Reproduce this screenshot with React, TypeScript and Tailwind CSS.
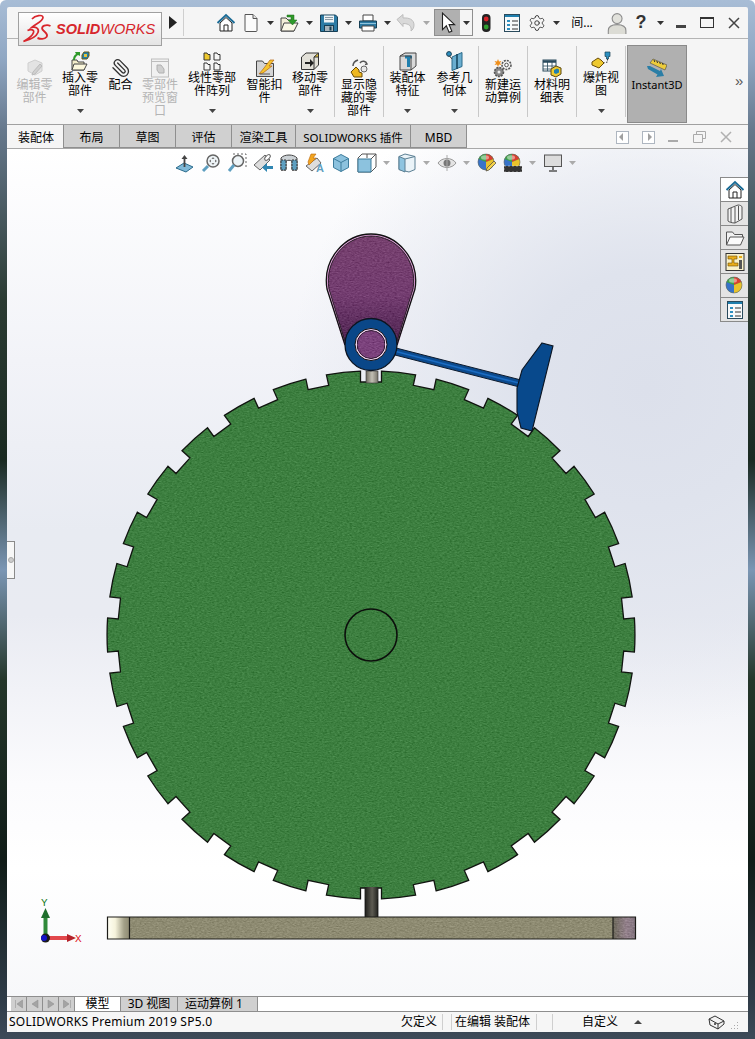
import type { ReactNode } from "react";
import { Paperclip, Settings } from "lucide-react";

// gear outline: 30 square notches cut from a 264 radius disc
function gearPath() {
  const cx = 371, cy = 635, R = 264, r = 253, w = 10.5;
  const h = Math.sqrt(R * R - w * w);
  let d = "";
  for (let k = 0; k < 30; k++) {
    const a = (k * 12 * Math.PI) / 180;
    const ux = Math.sin(a), uy = -Math.cos(a), tx = Math.cos(a), ty = Math.sin(a);
    const p = (rad: number, off: number) =>
      `${(cx + ux * rad + tx * off).toFixed(1)} ${(cy + uy * rad + ty * off).toFixed(1)}`;
    d += k === 0 ? `M${p(h, -w)}` : `A${R} ${R} 0 0 1 ${p(h, -w)}`;
    d += `L${p(r, -w)}L${p(r, w)}L${p(h, w)}`;
  }
  const b = (12 * 30 * Math.PI) / 180;
  d += `A${R} ${R} 0 0 1 ${(cx + Math.sin(b) * h - Math.cos(b) * w).toFixed(1)} ${(cy - Math.cos(b) * h - Math.sin(b) * w).toFixed(1)}Z`;
  return d;
}

function Ico({ children, s = 20 }: { children: ReactNode; s?: number }) {
  return (
    <svg width={s} height={s} viewBox="0 0 20 20" className="block shrink-0">
      {children}
    </svg>
  );
}

const HomeIcon = () => (
  <Ico>
    <path d="M1.5 10 10 2l8.500 8" fill="none" stroke="#1c6c96" strokeWidth="2" />
    <path d="M4 10v8h12v-8L10 4.500Z" fill="#fff" stroke="#222" />
    <path d="M8 18v-6h4v6" fill="none" stroke="#222" />
  </Ico>
);
const NewDoc = () => (
  <Ico>
    <path d="M4 1.500h8l4 4v12a1 1 0 0 1-1 1H5a1 1 0 0 1-1-1Z" fill="#fbfbfb" stroke="#555" />
    <path d="M12 1.500v4h4" fill="#e4e4e4" stroke="#555" />
  </Ico>
);
const OpenDoc = () => (
  <Ico>
    <path d="M2 18V5h5l2 2h6v11Z" fill="#f4efd8" stroke="#444" />
    <path d="M2 18 5 10h14l-4 8Z" fill="#fbf8e6" stroke="#444" />
    <path d="M8 2h7v5h3l-4.500 5L9 7h3V4H8Z" fill="#2f9a2a" stroke="#1c6a1a" strokeWidth=".5" />
  </Ico>
);
const SaveIcon = () => (
  <Ico>
    <path d="M1.500 2h15l2 2v14.500h-17Z" fill="#2c7ba5" stroke="#173f55" />
    <rect x="5" y="2.500" width="10" height="7" fill="#eef3f5" />
    <path d="M6 4.500h8M6 6.500h8" stroke="#8a9aa5" />
    <rect x="5.500" y="12.500" width="9" height="6" fill="#a7b4bb" stroke="#173f55" />
    <rect x="10.500" y="13.500" width="2" height="4" fill="#173f55" />
  </Ico>
);
const PrintIcon = () => (
  <Ico>
    <path d="M5 2h10v6H5Z" fill="#fff" stroke="#444" />
    <path d="M1.500 8h17v7h-17Z" fill="#2c7ba5" stroke="#173f55" />
    <path d="M4 13h12v5H4Z" fill="#fff" stroke="#444" />
    <path d="M2 10.500h16" stroke="#8ec3dc" />
  </Ico>
);
const UndoIcon = () => (
  <Ico>
    <path d="M1 6.500 7 1.500v3.500c6-.5 11 1.500 11 7 0 3-1.500 5-3 6 .8-4.500-1.500-7.500-8-7.500v3Z" fill="#d9d9d9" stroke="#bdbdbd" />
  </Ico>
);
const Cursor = () => (
  <Ico s={22}>
    <path d="M5 1v15l3.500-3.500 2.500 6 2.500-1-2.500-6h5Z" fill="#fff" stroke="#222" />
  </Ico>
);
const Traffic = () => (
  <Ico>
    <rect x="6" y="1" width="8.500" height="18" rx="4" fill="#222" />
    <circle cx="10.200" cy="6" r="2.400" fill="#d8232a" />
    <circle cx="10.200" cy="14" r="2.400" fill="#2f9d2f" />
  </Ico>
);
const ListPanel = () => (
  <Ico>
    <rect x="2.500" y="1.500" width="15" height="17" fill="#f7f9fa" stroke="#2a4a5c" />
    <path d="M3 3h14" stroke="#1f7fae" strokeWidth="2" />
    <path d="M5 7h3v2H5Zm0 4h3v2H5Zm0 4h3v2H5Z" fill="#2c8fc0" />
    <path d="M10 8h6M10 12h6M10 16h6" stroke="#333" />
  </Ico>
);
const UserIcon = () => (
  <Ico s={22}>
    <circle cx="11" cy="6" r="4.500" fill="#e2e2dc" stroke="#8d8d8d" />
    <path d="M3 21v-4c0-4 3-5.500 8-5.500s8 1.500 8 5.500v4Z" fill="#dcdcd5" stroke="#8d8d8d" />
  </Ico>
);
const Arrow = ({ color = "#333" }: { color?: string }) => (
  <svg width="7" height="4" viewBox="0 0 7 4" className="block">
    <path d="M0 0h7L3.500 4Z" fill={color} />
  </svg>
);

// ribbon pictures
const EditPart = () => (
  <Ico>
    <path d="M10 2 17 5v8l-7 4-7-4V5Z" fill="#e3e3e3" stroke="#cfcfcf" />
    <path d="m8 14 7-8 2 2-7 8-3 1Z" fill="#d0d0d0" stroke="#bcbcbc" />
  </Ico>
);
const InsertPart = () => (
  <Ico>
    <path d="M2 19V9h5l1 2h6v8Z" fill="#f2ecc9" stroke="#444" />
    <path d="M2 19 4 13h13l-3 6Z" fill="#fbf7dc" stroke="#444" />
    <path d="M3 9c0-3 1-5 3-6l-1-2h5v4L8 4C6 5 5 7 5 9Z" fill="#2f9a2a" />
    <path d="M14 1h5v4l-2 3h-5V4Z" fill="#1f7fae" stroke="#6b5a14" />
    <path d="M14 3h3v3h-3Z" fill="#e7c53b" />
  </Ico>
);
const Preview = () => (
  <Ico>
    <rect x="1.500" y="1" width="17" height="18" fill="#f1f1f1" stroke="#bdbdbd" />
    <path d="M1.500 3.500h17" stroke="#bdbdbd" />
    <path d="M7 7h4l3 4v4H9l-2-3Z" fill="#cfcfcf" stroke="#b0b0b0" />
  </Ico>
);
const Pattern = () => (
  <Ico>
    <path d="M2 2h3l1 1.500h2V9H2Z" fill="#eec92f" stroke="#333" />
    <path d="M12 2h3l1 1.500h2V9h-6ZM2 12h3l1 1.500h2V19H2ZM12 12h3l1 1.500h2V19h-6Z" fill="#f6f6f6" stroke="#333" />
  </Ico>
);
const Fastener = () => (
  <Ico>
    <path d="M1.500 18.500V3h6l2 2.500h9v13Z" fill="#d4d4d4" stroke="#444" />
    <path d="M4 16 9 10l6-8h4l-5 6h3l-9 7Z" fill="#f4c430" stroke="#b8650f" strokeWidth=".7" />
    <path d="M5 16h10" stroke="#555" />
  </Ico>
);
const MovePart = () => (
  <Ico>
    <path d="M1.500 6 6 2h12.500v12L14 18.500H1.500Z" fill="#e2e0d8" stroke="#333" />
    <path d="M14 6h4.500V2L14 6v12.500" fill="#e7c53b" stroke="#333" />
    <path d="M5 11h5V8l4 4-4 4v-3H5Z" fill="#222" />
  </Ico>
);
const ShowHidden = () => (
  <Ico>
    <path d="M2 14 7 9l3 3v2l3 1v4H5Z" fill="#eeb71f" stroke="#6a4c08" />
    <path d="M11 5c2-3 6-2 7 1l-2 .5M4 8c0-3 2-5 5-6" fill="none" stroke="#555" strokeWidth="1.500" />
    <circle cx="15" cy="11" r="3" fill="#e8e8e8" stroke="#666" />
  </Ico>
);
const Stack = () => (
  <Ico>
    <path d="M2 5 7 2h11v13l-5 4H2Z" fill="#d9d9d9" stroke="#444" />
    <path d="M7 6h7" stroke="#1f7fae" strokeWidth="3" />
    <path d="M10.500 6v10" stroke="#1f7fae" strokeWidth="3" />
    <path d="M2 5h11v14" fill="none" stroke="#444" />
  </Ico>
);
const RefGeom = () => (
  <Ico>
    <circle cx="4" cy="3" r="2.400" fill="#2c8fc0" stroke="#173f55" />
    <path d="M7 6 17 1.500v14L7 19.500Z" fill="#6aaed0" stroke="#2a6a8a" />
    <path d="M12 3v15" stroke="#12405a" strokeWidth="1.500" />
    <path d="M4 4.500 7 8" stroke="#444" />
  </Ico>
);
const Motion = () => (
  <Ico>
    <circle cx="13.500" cy="7" r="4.500" fill="#f2f2f2" stroke="#555" strokeWidth="1.600" strokeDasharray="2 1" />
    <circle cx="13.500" cy="7" r="1.800" fill="#fff" stroke="#555" />
    <circle cx="6" cy="14" r="4.500" fill="#888" stroke="#555" strokeWidth="1.600" strokeDasharray="2 1" />
    <circle cx="6" cy="14" r="1.500" fill="#eee" />
    <path d="m5 1 1 2.500L8.500 3 7 5l1.500 2L6 6.500 5 9 4 6.500 1.500 7 3 5 1.500 3 4 3.500Z" fill="#ef8f1c" />
  </Ico>
);
const Bom = () => (
  <Ico>
    <rect x="1" y="2" width="13" height="11" fill="#fff" stroke="#2a4a5c" />
    <path d="M1 3.500h13" stroke="#2a4a5c" strokeWidth="2.500" />
    <path d="M1 8h13M1 11h8M5.500 3v10M10 3v10" stroke="#2a4a5c" strokeWidth=".8" />
    <path d="m9 11 5-3 5 2v6l-5 3-5-2Z" fill="#eec92f" stroke="#5a4810" />
    <path d="m12 12 3-1.500 2 1v3l-3 1.500-2-1Z" fill="#1f7fae" />
  </Ico>
);
const Explode = () => (
  <Ico>
    <path d="m1 11 6-4 3 2 3 3-5 5-7-3Z" fill="#eec92f" stroke="#6a4c08" />
    <path d="M14 1h5v4.500h-1.500V8h-2V5.500H14Z" fill="#2c8fc0" stroke="#173f55" strokeWidth=".7" />
    <path d="M16.500 8v3l-4 1" fill="none" stroke="#333" strokeDasharray="1.500 1.500" />
  </Ico>
);
const Instant3D = () => (
  <Ico>
    <path d="M3 5 6 1l14 6-2 5Z" fill="#eccb3c" stroke="#444" strokeWidth=".6" />
    <path d="m7 2 .8 2m2-1 .8 2m2-1 .8 2m2-1 .8 2" stroke="#333" />
    <path d="M0 8h3l10 5 1-2 3 7-8 1 1.500-2.500L1 11Z" fill="#2b7ea6" />
  </Ico>
);

// heads-up bar pictures
const NormalTo = () => (
  <Ico>
    <path d="m1 15 8-5 9 4-7 5Z" fill="#7fb9d8" stroke="#2a6a8a" />
    <path d="M9.500 14V4" stroke="#444" strokeWidth="1.800" />
    <path d="m6.500 6 3-4 3 4Z" fill="#444" />
  </Ico>
);
const ZoomFit = () => (
  <Ico>
    <circle cx="12" cy="8" r="6" fill="#eef4f7" stroke="#666" strokeWidth="1.500" />
    <path d="m12 4 1.500 2h-3Zm0 8-1.500-2h3ZM8 8l2-1.500v3Zm8 0-2 1.500v-3Z" fill="#777" />
    <path d="m7 13-5 5" stroke="#5e9fc0" strokeWidth="3" />
  </Ico>
);
const ZoomArea = () => (
  <Ico>
    <path d="M6 1h13v13" fill="none" stroke="#666" strokeDasharray="2 2" />
    <circle cx="11" cy="8" r="5.500" fill="#eef4f7" stroke="#666" strokeWidth="1.500" />
    <path d="m7 12-5 6" stroke="#5e9fc0" strokeWidth="3" />
  </Ico>
);
const PrevView = () => (
  <Ico>
    <path d="m1 12 11-10 5 5L7 17Z" fill="#ddd" stroke="#666" />
    <ellipse cx="14.500" cy="4.500" rx="1.800" ry="3.500" transform="rotate(45 14.500 4.500)" fill="#fff" stroke="#666" />
    <path d="M20 13h-6v-3l-5 4.500 5 4.500v-3h6Z" fill="#2f86b2" />
  </Ico>
);
const Section = () => (
  <Ico>
    <path d="M2 5c3-4 13-4 16 0v12h-5V8c-2-1-4-1-6 0v9H2Z" fill="#ccd2d6" stroke="#444" />
    <path d="M2 7h5v10H2ZM13 7h5v10h-5Z" fill="#5e9fc0" stroke="#333" strokeDasharray="2 1" />
  </Ico>
);
const Dynamic = () => (
  <Ico>
    <path d="m1 13 11-8 4 5-9 8Z" fill="#ddd" stroke="#666" />
    <path d="m3 9 3-8h5L8 5h3l-7 7Z" fill="#f2a51f" stroke="#b8650f" strokeWidth=".6" />
    <text x="11" y="19" fontSize="11" fontWeight="700" fill="#5e9fc0" fontFamily="Liberation Sans">A</text>
  </Ico>
);
const Cube = () => (
  <Ico>
    <path d="m10 1.500 7.500 4v9l-7.500 4-7.500-4v-9Z" fill="#8cc2de" stroke="#3d7c9c" />
    <path d="m2.500 5.500 7.500 4 7.500-4M10 9.500v9" fill="none" stroke="#3d7c9c" />
  </Ico>
);
const Orient = () => (
  <Ico>
    <path d="M5 1h14v13l-5 5H1V5Z" fill="#fff" stroke="#555" />
    <path d="M1 6h13v13H1Z" fill="#8cc2de" stroke="#3d7c9c" />
    <path d="M10 1v4M14 6l5-5" stroke="#555" />
  </Ico>
);
const DisplayStyle = () => (
  <Ico>
    <path d="M2 3.500 8 1l10 2.500v13L12 19 2 16.500Z" fill="#eaf3f8" stroke="#5b7f93" />
    <path d="M2 3.500 8 6v13l-6-2.500Z" fill="#8ec4e0" stroke="#5b7f93" />
    <path d="M8 6l10-2.500" stroke="#5b7f93" />
  </Ico>
);
const Eye = () => (
  <Ico>
    <path d="M1 10c4-6 14-6 18 0-4 6-14 6-18 0Z" fill="#e4e4e4" stroke="#999" />
    <circle cx="10" cy="10" r="3.500" fill="#777" />
    <path d="M10 2v16" stroke="#aaa" />
  </Ico>
);
const Sphere = ({ extra }: { extra?: ReactNode }) => (
  <Ico>
    <circle cx="9" cy="9" r="8" fill="#2e9b3d" />
    <path d="M9 1a8 8 0 0 1 7.500 5L9 9Z" fill="#d8402f" />
    <path d="M9 1a8 8 0 0 0-7.500 5L9 9Z" fill="#3fa34a" />
    <path d="M1.500 6A8 8 0 0 0 9 17V9Z" fill="#3773c8" />
    <path d="M9 9v8a8 8 0 0 0 7.500-11Z" fill="#e9c22b" />
    <ellipse cx="8" cy="4.500" rx="4" ry="2.200" fill="#fff" opacity=".45" />
    <circle cx="9" cy="9" r="8" fill="none" stroke="#6d6d6d" strokeWidth=".6" />
    {extra}
  </Ico>
);
const Monitor = () => (
  <Ico>
    <rect x="1.500" y="2" width="17" height="11.500" fill="#dcdcdc" stroke="#555" />
    <path d="M10 14v3M6 18h8" stroke="#555" strokeWidth="1.600" />
  </Ico>
);
const FolderOpen = () => (
  <Ico>
    <path d="M1.500 17V4h6l2 2.500h8V9" fill="#f1f1f1" stroke="#555" />
    <path d="M1.500 17 5 9h14l-3.500 8Z" fill="#fafafa" stroke="#555" />
  </Ico>
);
const Layout = () => (
  <Ico>
    <rect x="1" y="1.500" width="18" height="17" fill="#f9f1c8" stroke="#333" />
    <path d="M3 4h9v3H9v4h4v3H3v-3h4V7H3Z" fill="#e9ad1a" stroke="#6a4c08" strokeWidth=".6" />
    <path d="M14 4h3v2h-3Z" fill="#e9ad1a" />
    <path d="M14 8h3v9h-3Z" fill="#555" />
  </Ico>
);
const Cylinders = () => (
  <Ico>
    <path d="M3 5 13 1c2 0 4 1 4 2v12l-7 4c-3 0-6-1-7-2Z" fill="#f2f2f2" stroke="#555" />
    <path d="M6 4v14M10 3v16M13.500 2v14" stroke="#555" />
  </Ico>
);

function RibbonCol({
  label, icon, low = false, off = false, drop = false, className,
}: {
  label: string[]; icon: ReactNode; low?: boolean; off?: boolean; drop?: boolean; className: string;
}) {
  return (
    <div className={`flex h-full flex-col items-center ${low ? "pt-[19px]" : "pt-[12px]"} ${className}`}>
      <div className="flex h-[20px] items-center justify-center">{icon}</div>
      <div className={`text-center text-[12px] leading-[13px] whitespace-nowrap ${off ? "text-[#b4b4b4]" : "text-black"}`}>
        {label.map((l) => (
          <div key={l}>{l}</div>
        ))}
      </div>
      {drop && (
        <div className="mt-auto mb-[11px]">
          <Arrow color="#444" />
        </div>
      )}
    </div>
  );
}

const Sep = () => <div className="my-[7px] w-px shrink-0 bg-[#c8c8c8]" />;

function Slot({ className, children }: { className: string; children: ReactNode }) {
  return <div className={`flex shrink-0 items-center justify-center ${className}`}>{children}</div>;
}

function PaneBtn({ children, active = false }: { children: ReactNode; active?: boolean }) {
  return (
    <div className={`flex h-[25px] w-[28px] items-center justify-center border border-r-0 border-[#8a8a8a] -mt-px ${active ? "bg-white" : "bg-[#e4e4e4]"}`}>
      {children}
    </div>
  );
}

function NavBtn({ d }: { d: string }) {
  return (
    <div className="flex h-full w-[16px] items-center justify-center border-r border-[#8e8e8e] bg-[#cfcfcf]">
      <svg width="10" height="10" viewBox="0 0 10 10">
        <path d={d} fill="#a4a4a4" stroke="#8c8c8c" strokeWidth=".5" />
      </svg>
    </div>
  );
}

const mainTabs = ["布局", "草图", "评估"];

export default function App() {
  return (
    <div className="flex h-[1039px] w-[755px] flex-col overflow-hidden rounded-t-[6px] bg-[linear-gradient(180deg,#a8bdd6_0,#8fa6c2_60px,#66788c_130px,#2b3b33_300px,#1a2a22_460px,#7b96b4_570px,#24362a_680px,#101c18_860px,#2f3c48_1000px,#3d4a58_1039px)] px-[7px] pt-[7px] pb-[7px] font-['Noto_Sans','Noto_Sans_CJK_SC',sans-serif] text-black">
      <div className="flex min-h-0 flex-1 flex-col rounded-t-[2px] bg-[#f5f5f5]">
        {/* title row */}
        <div className="relative z-10 flex h-[31px] shrink-0 items-center">
          <div className="mt-[5px] ml-[11px] flex h-[34px] w-[144px] shrink-0 items-center gap-[2px] self-start border border-[#a0a0a0] bg-[linear-gradient(180deg,#fff,#e4e4e4)] pl-[4px]">
            <svg width="31" height="30" viewBox="0 0 31 30" className="shrink-0">
              <path d="M9 5C12 1.500 20 0 20 3.500 20 7.500 12 10 8.500 13.500 13 12.500 16.500 14.500 15 18.500 13 23.500 6 26 .5 27.500 5 25 9.500 22 10.500 18.500 11.500 15.500 8 15 4.500 16.500" fill="none" stroke="#d9262c" strokeWidth="1.700" />
              <path d="M27.500 12C23.500 10 17.500 12 19.500 15.500 21 18 26 19.500 23.500 23 21.500 25.500 17 25 14.500 24" fill="none" stroke="#d9262c" strokeWidth="1.900" />
            </svg>
            <span className="font-['Liberation_Sans',sans-serif] text-[14.500px] leading-none text-[#d7262c] italic">
              <span className="font-bold">SOLID</span>WORKS
            </span>
          </div>
          <Slot className="w-[21px]">
            <svg width="8" height="13" viewBox="0 0 8 13">
              <path d="M0 0 8 6.500 0 13Z" fill="#222" />
            </svg>
          </Slot>
          <div className="h-[27px] w-px shrink-0 bg-[#cfcfcf]" />
          <div className="w-[30px] shrink-0" />
          <Slot className="w-[24px]"><HomeIcon /></Slot>
          <Slot className="w-[26px]"><NewDoc /></Slot>
          <Slot className="w-[12px]"><Arrow /></Slot>
          <Slot className="w-[26px]"><OpenDoc /></Slot>
          <Slot className="w-[14px]"><Arrow /></Slot>
          <Slot className="w-[26px]"><SaveIcon /></Slot>
          <Slot className="w-[12px]"><Arrow /></Slot>
          <Slot className="w-[28px]"><PrintIcon /></Slot>
          <Slot className="w-[10px]"><Arrow /></Slot>
          <Slot className="w-[28px]"><UndoIcon /></Slot>
          <Slot className="w-[12px]"><Arrow color="#a8a8a8" /></Slot>
          <div className="ml-[2px] flex h-[27px] w-[39px] shrink-0 border border-[#8e8e8e]">
            <div className="flex w-[25px] items-center justify-center bg-[#b0b0b0]"><Cursor /></div>
            <div className="flex flex-1 items-center justify-center bg-[#f4f4f4]"><Arrow /></div>
          </div>
          <Slot className="w-[26px]"><Traffic /></Slot>
          <Slot className="w-[26px]"><ListPanel /></Slot>
          <Slot className="w-[24px]"><Settings size={18} strokeWidth={1.2} color="#333" /></Slot>
          <Slot className="w-[14px]"><Arrow /></Slot>
          <Slot className="w-[38px] text-[12px]">间...</Slot>
          <Slot className="w-[30px]"><UserIcon /></Slot>
          <Slot className="w-[20px] font-['Liberation_Sans',sans-serif] text-[18px] font-bold text-[#333]">?</Slot>
          <Slot className="w-[18px]"><Arrow /></Slot>
          <Slot className="w-[24px]"><div className="mt-[7px] h-[3px] w-[10px] bg-[#444]" /></Slot>
          <Slot className="w-[27px]"><div className="h-[11px] w-[14px] border border-t-[2px] border-[#333]" /></Slot>
          <Slot className="w-[27px]">
            <svg width="12" height="12" viewBox="0 0 12 12">
              <path d="m1 1 10 10M11 1 1 11" stroke="#444" strokeWidth="1.500" />
            </svg>
          </Slot>
        </div>

        {/* ribbon */}
        <div className="flex h-[87px] shrink-0 border-t border-b border-[#a0a0a0] border-t-[#b4b4b4] pl-[4px]">
          <RibbonCol className="w-[47px]" low off label={["编辑零", "部件"]} icon={<EditPart />} />
          <RibbonCol className="w-[44px]" drop label={["插入零", "部件"]} icon={<InsertPart />} />
          <RibbonCol className="w-[37px]" low label={["配合"]} icon={<Paperclip size={20} strokeWidth={1.6} color="#333" className="-scale-x-100" />} />
          <RibbonCol className="w-[42px]" low off label={["零部件", "预览窗", "口"]} icon={<Preview />} />
          <RibbonCol className="w-[62px]" drop label={["线性零部", "件阵列"]} icon={<Pattern />} />
          <RibbonCol className="w-[43px]" low label={["智能扣", "件"]} icon={<Fastener />} />
          <RibbonCol className="w-[48px]" drop label={["移动零", "部件"]} icon={<MovePart />} />
          <Sep />
          <RibbonCol className="w-[48px]" low label={["显示隐", "藏的零", "部件"]} icon={<ShowHidden />} />
          <Sep />
          <RibbonCol className="w-[47px]" drop label={["装配体", "特征"]} icon={<Stack />} />
          <RibbonCol className="w-[47px]" drop label={["参考几", "何体"]} icon={<RefGeom />} />
          <Sep />
          <RibbonCol className="w-[48px]" low label={["新建运", "动算例"]} icon={<Motion />} />
          <Sep />
          <RibbonCol className="w-[48px]" low label={["材料明", "细表"]} icon={<Bom />} />
          <Sep />
          <RibbonCol className="w-[48px]" drop label={["爆炸视", "图"]} icon={<Explode />} />
          <Sep />
          <div className="mt-[6px] mb-[1px] ml-[1px] flex w-[60px] shrink-0 flex-col items-center border border-[#8a8a8a] bg-[#b0b0b0] pt-[12px]">
            <Instant3D />
            <div className="text-[11px] leading-[13px]">Instant3D</div>
          </div>
          <div className="ml-[48px] self-center font-['Liberation_Sans',sans-serif] text-[15px] text-[#555]">»</div>
        </div>

        {/* tab strip */}
        <div className="flex h-[23px] shrink-0 items-stretch pl-[2px]">
          <div className="flex w-[55px] items-center justify-center border-r border-[#8f8f8f] pt-[3px] text-[12px]">装配体</div>
          {mainTabs.map((t) => (
            <div key={t} className="flex w-[56px] items-center justify-center border-r border-b border-[#8f8f8f] bg-[#d0d0d0] pt-[3px] text-[12px]">{t}</div>
          ))}
          <div className="flex w-[64px] items-center justify-center border-r border-b border-[#8f8f8f] bg-[#d0d0d0] pt-[3px] text-[12px]">渲染工具</div>
          <div className="flex w-[115px] items-center justify-center border-r border-b border-[#8f8f8f] bg-[#d0d0d0] pt-[3px] text-[11.5px]">SOLIDWORKS 插件</div>
          <div className="flex w-[56px] items-center justify-center border-r border-b border-[#8f8f8f] bg-[#d0d0d0] pt-[3px] text-[12px]">MBD</div>
          <div className="ml-[149px] flex items-center gap-[13px] pt-[1px]">
            <div className="flex h-[13px] w-[13px] items-center border border-[#aeb6c0] bg-white"><div className="ml-[2px] h-0 w-0 border-y-[4px] border-r-[4px] border-y-transparent border-r-[#a0a0a0]" /></div>
            <div className="flex h-[13px] w-[13px] items-center justify-end border border-[#aeb6c0] bg-white"><div className="mr-[2px] h-0 w-0 border-y-[4px] border-l-[4px] border-y-transparent border-l-[#a0a0a0]" /></div>
            <div className="mt-[8px] h-[2px] w-[10px] bg-[#aaa]" />
            <svg width="13" height="12" viewBox="0 0 13 12" className="ml-[2px]">
              <path d="M3.500 3V.5h9v7H9M.5 3.500h9v8h-9Z" fill="none" stroke="#aaa" />
            </svg>
            <svg width="12" height="12" viewBox="0 0 12 12" className="ml-px">
              <path d="m1 1 10 10M11 1 1 11" stroke="#b0b0b0" strokeWidth="1.500" />
            </svg>
          </div>
        </div>

        {/* graphics area */}
        <div className="relative min-h-0 flex-1 overflow-hidden border-t border-[#a8a8a8] bg-[radial-gradient(ellipse_360px_340px_at_640px_240px,#dce0eb_0%,#dfe3ed_35%,rgba(223,227,237,0)_100%),linear-gradient(180deg,#ffffff_0%,#f2f3f8_25%,#e8ebf2_45%,#e9ebf2_55%,#fbfbfd_75%,#ffffff_85%,#f7f8fa_100%)]">
          <svg viewBox="7 149 741 847" className="absolute inset-0 h-full w-full">
            <defs>
              <filter id="grain" x="0" y="0" width="100%" height="100%" colorInterpolationFilters="sRGB">
                <feTurbulence type="fractalNoise" baseFrequency="0.4 0.8" numOctaves="3" seed="4" result="n" />
                <feColorMatrix in="n" type="matrix" values=".33 .33 .33 0 0 .33 .33 .33 0 0 .33 .33 .33 0 0 0 0 0 0 1" result="g" />
                <feComposite in="SourceGraphic" in2="g" operator="arithmetic" k1="0" k2="1" k3=".32" k4="-.16" result="t" />
                <feComposite in="t" in2="SourceAlpha" operator="in" />
              </filter>
              <linearGradient id="shaftTop" x1="0" x2="1" y1="0" y2="0">
                <stop offset="0" stopColor="#6e6a60" />
                <stop offset=".5" stopColor="#c2bfb4" />
                <stop offset="1" stopColor="#77736a" />
              </linearGradient>
              <linearGradient id="shaftLow" x1="0" x2="1" y1="0" y2="0">
                <stop offset="0" stopColor="#1f1f1c" />
                <stop offset=".55" stopColor="#5d5b52" />
                <stop offset="1" stopColor="#232320" />
              </linearGradient>
              <linearGradient id="cam" x1="0" x2="0" y1="0" y2="1">
                <stop offset="0" stopColor="#77416f" />
                <stop offset=".55" stopColor="#733d70" />
                <stop offset="1" stopColor="#4d2350" />
              </linearGradient>
              <linearGradient id="endL" x1="0" x2="1" y1="0" y2="0">
                <stop offset="0" stopColor="#fffff4" />
                <stop offset=".35" stopColor="#f6f3dc" />
                <stop offset=".75" stopColor="#a3a088" />
                <stop offset="1" stopColor="#8e8a72" />
              </linearGradient>
              <linearGradient id="endR" x1="0" x2="1" y1="0" y2="0">
                <stop offset="0" stopColor="#6e6a5c" />
                <stop offset=".6" stopColor="#94818c" />
                <stop offset="1" stopColor="#847680" />
              </linearGradient>
            </defs>

            {/* lower shaft and base */}
            <rect x="365" y="886" width="13" height="32" fill="url(#shaftLow)" stroke="#111" strokeWidth=".8" />
            <rect x="107.500" y="917" width="528" height="22" fill="#8e8b72" filter="url(#grain)" />
            <rect x="107.500" y="917" width="22" height="22" fill="url(#endL)" />
            <rect x="613" y="917" width="22.500" height="22" fill="url(#endR)" filter="url(#grain)" />
            <path d="M107.500 917h528v22h-528ZM129.500 917v22M613 917v22" fill="none" stroke="#1c1c18" strokeWidth="1.200" />

            {/* gear */}
            <path d={gearPath()} fill="#3d7f40" filter="url(#grain)" />
            <path d={gearPath()} fill="none" stroke="#10140f" strokeWidth="1.300" />
            <circle cx="371" cy="635" r="26" fill="none" stroke="#0c0f0c" strokeWidth="1.600" />
            <rect x="366" y="371" width="12" height="12" fill="url(#shaftTop)" stroke="#333" strokeWidth=".6" />
            <rect x="365" y="887" width="13" height="12" fill="url(#shaftLow)" />

            {/* cam */}
            <path d="M345 345 328 289c-5-30 18-54 43-54s48 24 43 54l-17 56Z" fill="url(#cam)" filter="url(#grain)" />
            <path d="M345 345 328 289c-5-30 18-54 43-54s48 24 43 54l-17 56" fill="none" stroke="#e6a6e0" strokeWidth="1.800" />
            <path d="M345 345 327 289c-5-31 19-55 44-55s49 24 44 55l-18 56" fill="none" stroke="#111" strokeWidth="1.300" />
            <path d="M346 345 329 289c-5-29 17-53 42-53s47 24 42 53l-17 56" fill="none" stroke="#111" strokeWidth=".8" />

            {/* arm and striker */}
            <path d="M396 348 521 380l-1.500 7L395 355Z" fill="#0b4a8e" stroke="#0d1a2c" strokeWidth="1" />
            <path d="M396 351.500 520.500 383.500" stroke="#1b6cc2" strokeWidth="1.600" />
            <path d="M542 343 553 346 532 431 521 428 517 412 517 388 522 370Z" fill="#08498c" stroke="#0a1422" strokeWidth="1.100" />

            {/* hub */}
            <circle cx="371" cy="344.500" r="26" fill="#0a4788" stroke="#0c1420" strokeWidth="1.300" />
            <circle cx="371" cy="344.500" r="16" fill="#f0d4ee" stroke="#111" strokeWidth="1" />
            <circle cx="371" cy="344.500" r="14" fill="#7b427c" stroke="#311a33" strokeWidth="1" filter="url(#grain)" />

            {/* triad */}
            <path d="M45.500 938V917" stroke="#2f8a3a" strokeWidth="4" />
            <path d="m41 918 4.500-10 4.500 10Z" fill="#1f6e2c" />
            <path d="M47 938h21" stroke="#e2484c" strokeWidth="4" />
            <path d="m67 934 9 4-9 4Z" fill="#b5222a" />
            <circle cx="45.500" cy="938" r="4.500" fill="#1a1a1a" />
            <circle cx="44" cy="938" r="3" fill="#1414c8" />
            <text x="41" y="906" fontSize="11" fill="#167a22" fontFamily="Liberation Mono">Y</text>
            <text x="75" y="942" fontSize="11" fill="#e0161c" fontFamily="Liberation Mono">X</text>
          </svg>

          {/* heads-up toolbar */}
          <div className="absolute top-[3px] left-[165px] flex h-[22px] items-center">
            <Slot className="w-[26px]"><NormalTo /></Slot>
            <Slot className="w-[26px]"><ZoomFit /></Slot>
            <Slot className="w-[26px]"><ZoomArea /></Slot>
            <Slot className="w-[26px]"><PrevView /></Slot>
            <Slot className="w-[26px]"><Section /></Slot>
            <Slot className="w-[26px]"><Dynamic /></Slot>
            <Slot className="w-[26px]"><Cube /></Slot>
            <Slot className="w-[26px]"><Orient /></Slot>
            <Slot className="w-[12px]"><Arrow color="#aaa" /></Slot>
            <Slot className="ml-[2px] w-[26px]"><DisplayStyle /></Slot>
            <Slot className="w-[12px]"><Arrow color="#aaa" /></Slot>
            <Slot className="ml-[2px] w-[26px]"><Eye /></Slot>
            <Slot className="w-[12px]"><Arrow color="#aaa" /></Slot>
            <Slot className="ml-[2px] w-[26px]">
              <Sphere extra={<path d="m9 18 1-3 7-7 2 2-7 7Z" fill="#f4d24a" stroke="#444" strokeWidth=".7" />} />
            </Slot>
            <Slot className="w-[26px]">
              <Sphere extra={<path d="M1 13h18v6H1Z" fill="#333" stroke="#eee" strokeWidth=".5" strokeDasharray="2 2" />} />
            </Slot>
            <Slot className="w-[12px]"><Arrow color="#aaa" /></Slot>
            <Slot className="ml-[2px] w-[26px]"><Monitor /></Slot>
            <Slot className="w-[12px]"><Arrow color="#aaa" /></Slot>
          </div>

          {/* task pane tabs */}
          <div className="absolute top-[29px] right-0 flex flex-col">
            <PaneBtn active><HomeIcon /></PaneBtn>
            <PaneBtn><Cylinders /></PaneBtn>
            <PaneBtn><FolderOpen /></PaneBtn>
            <PaneBtn><Layout /></PaneBtn>
            <PaneBtn><Sphere /></PaneBtn>
            <PaneBtn><ListPanel /></PaneBtn>
          </div>

          {/* left panel handle */}
          <div className="absolute top-[392px] left-0 flex h-[38px] w-[8px] items-center justify-center border border-l-0 border-[#8a8a8a] bg-[#f7f7f7]">
            <div className="h-[6px] w-[6px] shrink-0 rounded-full border border-[#aaa] bg-[#ccc]" />
          </div>
        </div>

        {/* sheet tabs */}
        <div className="flex h-[16px] shrink-0 border-t border-b border-[#8e8e8e] bg-white pl-[4px]">
          <NavBtn d="M1.500 1v8M8.500 1 3 5l5.500 4Z" />
          <NavBtn d="M8 1 2 5l6 4Z" />
          <NavBtn d="m2 1 6 4-6 4Z" />
          <NavBtn d="M8.500 1v8M1.500 1 7 5 1.500 9Z" />
          <div className="flex w-[45px] items-center justify-center text-[12px] leading-none">模型</div>
          <div className="flex w-[58px] items-center justify-center border-x border-[#8e8e8e] bg-[#d0d0d0] text-[12px] leading-none">3D 视图</div>
          <div className="flex w-[80px] items-center border-r border-[#8e8e8e] bg-[#d0d0d0] pl-[7px] text-[12px] leading-none">运动算例 1</div>
        </div>

        {/* status bar */}
        <div className="flex h-[20px] shrink-0 items-center bg-[#f6f6f6] text-[12px] leading-none">
          <div className="w-[394px] shrink-0 pl-[2px] tracking-[.25px] whitespace-nowrap">SOLIDWORKS Premium 2019 SP5.0</div>
          <div className="flex h-[16px] w-[42px] shrink-0 items-center border-r border-[#cfcfcf]">欠定义</div>
          <div className="ml-[8px] flex h-[16px] w-[86px] shrink-0 items-center border-x border-[#cfcfcf] pl-[3px] whitespace-nowrap">在编辑 装配体</div>
          <div className="ml-[15px] flex h-[16px] w-[94px] shrink-0 items-center border-l border-[#cfcfcf] pl-[29px]">
            自定义
            <div className="ml-[16px] h-0 w-0 shrink-0 border-x-[4px] border-b-[4px] border-x-transparent border-b-[#444]" />
          </div>
          <Slot className="ml-[61px] w-[18px]">
            <svg width="17" height="15" viewBox="0 0 17 15">
              <path d="M1 4 7 1l9 5v3l-6 5-8-4Z" fill="#f2f2f2" stroke="#333" />
              <path d="m1 4 9 5 6-3M10 9v5" fill="none" stroke="#333" />
              <circle cx="7" cy="9" r="1" fill="#333" />
            </svg>
          </Slot>
          <svg width="9" height="9" viewBox="0 0 9 9" className="mt-[7px] ml-[5px] shrink-0">
            <path d="M7 1h1v1H7ZM4 4h1v1H4ZM7 4h1v1H7ZM1 7h1v1H1ZM4 7h1v1H4ZM7 7h1v1H7Z" fill="#aaa" />
          </svg>
        </div>
      </div>
    </div>
  );
}
